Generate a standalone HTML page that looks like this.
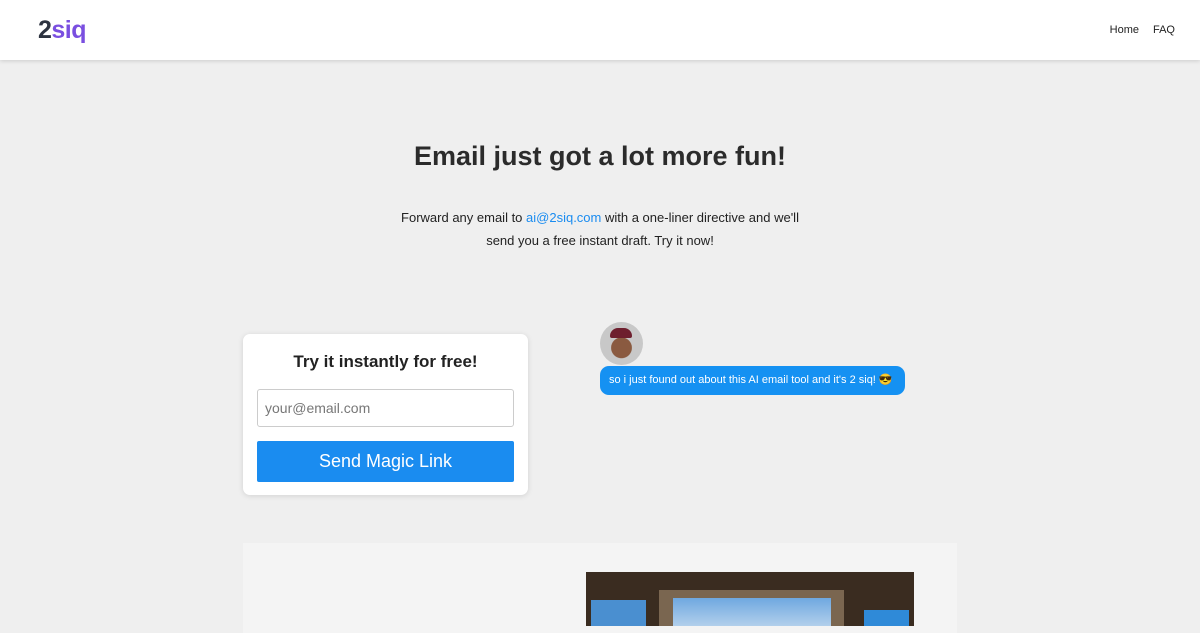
<!DOCTYPE html>
<html><head><style>
*{margin:0;padding:0;box-sizing:border-box}
body{width:1200px;height:626px;overflow:hidden;background:#efefef;font-family:"Liberation Sans",sans-serif;color:#222;position:relative}
.nav{position:absolute;left:0;top:0;width:1200px;height:60px;background:#fff;box-shadow:0 1px 4px rgba(0,0,0,.15);z-index:2}
.logo{position:absolute;left:38px;top:16px;font-size:25px;font-weight:bold;letter-spacing:-0.5px}
.logo .a{color:#2d3340}.logo .b{color:#7a4fe0}
.links{position:absolute;right:25px;top:24px;font-size:11px;color:#222}
.links span{margin-left:14px}
h1{position:absolute;top:141px;width:1200px;text-align:center;font-size:27px;font-weight:bold;color:#2b2b2b}
.sub{position:absolute;top:206px;width:1200px;text-align:center;font-size:13px;line-height:23px;color:#222}
.sub a{color:#1a8cf0;text-decoration:none}
.card{position:absolute;left:243px;top:334px;width:285px;height:161px;background:#fff;border-radius:7px;box-shadow:0 1px 6px rgba(0,0,0,.12)}
.card h2{text-align:center;font-size:17px;margin-top:18px;font-weight:bold;color:#222}
.inp{position:absolute;left:14px;top:55px;width:257px;height:38px;border:1px solid #ccc;border-radius:3px;font-size:14px;color:#777;padding:10px 7px}
.btn{position:absolute;left:14px;top:107px;width:257px;height:41px;background:#1a8cf0;color:#fff;font-size:18px;text-align:center;line-height:41px;border-radius:2px}
.av{position:absolute;left:600px;top:322px;width:43px;height:43px;border-radius:50%;background:radial-gradient(circle at 50% 60%,#8a5a40 0 30%,#c8c8c8 32%);overflow:hidden}
.av:before{content:"";position:absolute;left:10px;top:6px;width:22px;height:10px;background:#6e1f2e;border-radius:8px 8px 2px 2px}
.bub{position:absolute;left:600px;top:366px;width:305px;height:29px;background:#1591f2;border-radius:9px;color:#fff;font-size:11px;line-height:29px;padding-left:9px}
.sec{position:absolute;left:243px;top:543px;width:714px;height:90px;background:#f4f4f4}
.img{position:absolute;left:586px;top:572px;width:328px;height:54px;background:#3a2c20;overflow:hidden}
.img .in{position:absolute;left:73px;top:18px;width:185px;height:50px;background:#7a6650}
.img .sky{position:absolute;left:87px;top:26px;width:158px;height:40px;background:linear-gradient(#6fa8e0,#cfe0f0)}
.img .l{position:absolute;left:5px;top:28px;width:55px;height:40px;background:#4a8fd0}
.img .r{position:absolute;right:5px;top:38px;width:45px;height:30px;background:#2f8ad8}
</style></head><body>
<div class="nav"><div class="logo"><span class="a">2</span><span class="b">siq</span></div><div class="links"><span>Home</span><span>FAQ</span></div></div>
<h1>Email just got a lot more fun!</h1>
<div class="sub">Forward any email to <a>ai@2siq.com</a> with a one-liner directive and we'll<br>send you a free instant draft. Try it now!</div>
<div class="card"><h2>Try it instantly for free!</h2><div class="inp">your@email.com</div><div class="btn">Send Magic Link</div></div>
<div class="av"></div>
<div class="bub">so i just found out about this AI email tool and it's 2 siq! 😎</div>
<div class="sec"></div>
<div class="img"><div class="in"></div><div class="sky"></div><div class="l"></div><div class="r"></div></div>
</body></html>
